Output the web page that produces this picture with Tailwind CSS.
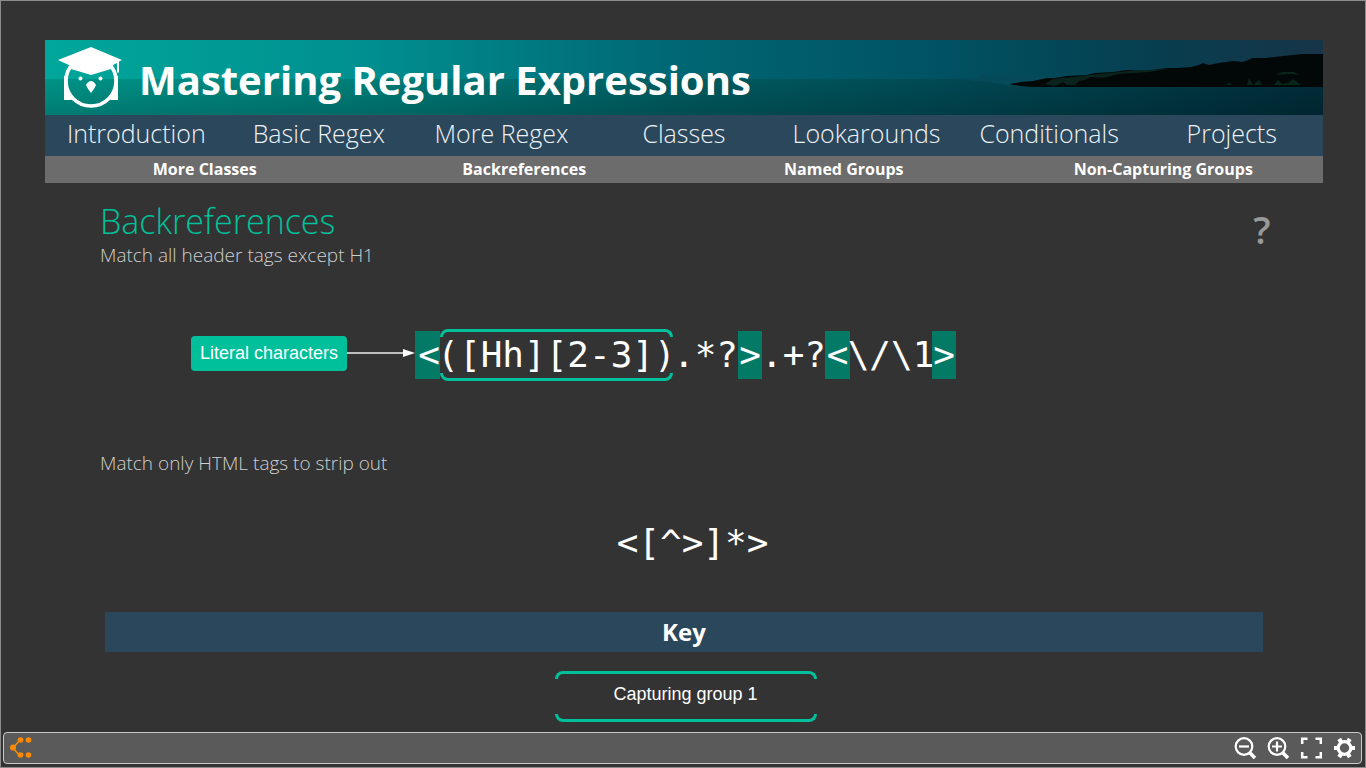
<!DOCTYPE html>
<html lang="en">
<head>
<meta charset="utf-8">
<meta name="viewport" content="width=device-width, initial-scale=1">
<title>Mastering Regular Expressions</title>
<script src="https://cdn.jsdelivr.net/npm/@tailwindcss/browser@4"></script>
</head>
<body class="flex min-h-screen flex-col border border-[#8c8c8c] bg-[#333333] font-['Open_Sans',sans-serif] text-white">
  <div class="mr-[42px] ml-11 pt-[39px]">
    <header>
      <div class="relative h-[75px] overflow-hidden">
        <svg class="absolute inset-0 h-full w-full" viewBox="0 0 1278 75" preserveAspectRatio="none" aria-hidden="true">
          <defs>
            <linearGradient id="sky" x1="0" x2="1" y1="0" y2="0">
              <stop offset="0" stop-color="#00a79a"/><stop offset=".25" stop-color="#008f90"/><stop offset=".5" stop-color="#006673"/><stop offset=".7" stop-color="#005262"/><stop offset=".86" stop-color="#063f50"/><stop offset="1" stop-color="#173448"/>
            </linearGradient>
            <linearGradient id="sea" x1="0" x2="1" y1="0" y2="0">
              <stop offset="0" stop-color="#009387"/><stop offset=".25" stop-color="#007d78"/><stop offset=".5" stop-color="#005c60"/><stop offset=".7" stop-color="#004954"/><stop offset="1" stop-color="#002c38"/>
            </linearGradient>
            <linearGradient id="depth" x1="0" x2="0" y1="0" y2="1">
              <stop offset="0" stop-color="#000" stop-opacity="0"/><stop offset="1" stop-color="#000" stop-opacity=".16"/>
            </linearGradient>
          </defs>
          <rect width="1278" height="75" fill="url(#sky)"/>
          <rect y="39" width="1278" height="36" fill="url(#sea)"/>
          <rect y="39" width="1278" height="36" fill="url(#depth)"/>
          <path d="M905 39l22-1 9-1v-3h4v3l17-1v-3h3v3l20 0 32 1v4l-50 4-20-3z" fill="#05495a"/>
          <path d="M965 44l11-2 12-1 14-3 8 0 12-2 20-1 8-2 18-1 14-2 18 1 22-3 10 0 14-1 8-2 4-2 6 2 10-2 14-2 10 1 10-4 12 0 18-2 20-2 20 0v33h-290l-12-1-8-1z" fill="#020807"/>
          <path d="M1000 44l8-5 20-2 16-2 40-4 40-2-20 3-30 2-16 4-12-1-6 3-6 1-4 4-8 0-4-3-8 4z" fill="#0a231c"/>
          <path d="M1180 45l4-2 4 2 14 0 2-7 4 7 6-5 3 5 12 0 4-5 4 4 6-1 5-4 8 6zM1230 35l7-3 12 0 6 3-8-1z" fill="#08251a"/>
        </svg>
        <div class="relative flex h-full items-center">
          <svg class="mt-1 ml-3 h-[66px] w-[66px] shrink-0 self-start" viewBox="0 0 66 66" role="img" aria-label="Owl logo">
            <circle cx="34" cy="37" r="25" fill="none" stroke="#fff" stroke-width="3.6"/>
            <path d="M1 16L34 3l31 13-3 1.500v11h-2V19l-6 3v3L34 31 14 25v-3z" fill="#fff"/>
            <path d="M9 32c-2 10 1 16 6 24H7V32zM59 32c2 10-1 16-6 24h8V32z" fill="#fff"/>
            <circle cx="23.500" cy="34.500" r="2" fill="#fff"/><circle cx="43.500" cy="34.500" r="2" fill="#fff"/>
            <path d="M34 37c2 0 3 1 5 4-1 3-3 5-5 8-2-3-4-5-5-8 2-3 3-4 5-4z" fill="#fff"/>
          </svg>
          <h1 class="ml-4 pt-1 text-[40px] leading-none font-bold whitespace-nowrap">Mastering Regular Expressions</h1>
        </div>
      </div>
      <nav aria-label="Chapters" class="grid h-[41px] grid-cols-7 bg-[#2b475c] text-center text-[25px] leading-9 font-light text-[#eef2f5]">
        <a href="#">Introduction</a><a href="#">Basic Regex</a><a href="#">More Regex</a><a href="#">Classes</a><a href="#">Lookarounds</a><a href="#">Conditionals</a><a href="#">Projects</a>
      </nav>
      <nav aria-label="Sections" class="grid h-[27px] grid-cols-4 bg-[#6c6c6c] text-center text-base leading-[26px] font-bold">
        <a href="#">More Classes</a><a href="#">Backreferences</a><a href="#">Named Groups</a><a href="#">Non-Capturing Groups</a>
      </nav>
    </header>
  </div>
  <main class="flex grow flex-col pr-[102px] pl-[99px]">
    <div class="flex justify-between pt-[18px]">
      <div>
        <h2 class="text-[34px] leading-10 font-light text-[#00c09b]">Backreferences</h2>
        <p class="mt-0.5 text-[19px] leading-6 font-light text-[#cfcfcf]">Match all header tags except H1</p>
      </div>
      <button type="button" aria-label="Help" class="-mr-[17px] h-14 w-9 text-[38px] leading-[56px] font-semibold text-[#999999]">?</button>
    </div>
    <div class="mt-[62px] ml-[91px] flex h-[52px] items-center">
      <div class="mb-1 h-[35px] w-[156px] shrink-0 rounded-sm bg-[#00c09b] text-center font-['Liberation_Sans',sans-serif] text-[18px] leading-[34px]">Literal characters</div>
      <svg class="mb-1 h-3 w-[68px] shrink-0" viewBox="0 0 68 12" aria-hidden="true"><path d="M0 6h58" stroke="#eee" stroke-width="1.500"/><path d="M56 2l12 4-12 4z" fill="#fff"/></svg>
      <code class="flex h-[52px] items-center font-['DejaVu_Sans_Mono',monospace] text-[36px] leading-[48px] whitespace-nowrap">
        <span class="flex w-[25px] justify-end bg-[#027a66]">&lt;</span>
        <span class="relative flex h-[52px] w-[233px] items-center justify-center">
          <span class="absolute inset-x-0 top-0 h-2 rounded-t-lg border-x-3 border-t-3 border-[#00c09b]"></span>([Hh][2-3])<span class="absolute inset-x-0 bottom-0 h-2 rounded-b-lg border-x-3 border-b-3 border-[#00c09b]"></span>
        </span>
        <span class="flex w-[65px] justify-center">.*?</span>
        <span class="flex w-6 justify-center bg-[#027a66]">&gt;</span>
        <span class="flex w-[63px] justify-center">.+?</span>
        <span class="flex w-[25px] justify-center bg-[#027a66]">&lt;</span>
        <span class="flex w-[82px] justify-center">\/\1</span>
        <span class="flex w-6 justify-center bg-[#027a66]">&gt;</span>
      </code>
    </div>
    <p class="mt-[70px] text-[19px] leading-6 font-light text-[#cfcfcf]">Match only HTML tags to strip out</p>
    <code class="mt-11 ml-[22px] block text-center font-['DejaVu_Sans_Mono',monospace] text-[36px] leading-[48px]">&lt;[^&gt;]*&gt;</code>
    <h3 class="mt-[45px] ml-[5px] h-10 bg-[#2b475c] text-center text-2xl leading-10 font-bold">Key</h3>
    <div class="relative mt-[19px] ml-2 flex h-[51px] w-[262px] items-center justify-center self-center font-['Liberation_Sans',sans-serif] text-[18px]">
      <span class="absolute inset-x-0 top-0 h-2 rounded-t-lg border-x-3 border-t-3 border-[#00c09b]"></span>
      <span class="pb-1">Capturing group 1</span>
      <span class="absolute inset-x-0 bottom-0 h-2 rounded-b-lg border-x-3 border-b-3 border-[#00c09b]"></span>
    </div>
  </main>
  <footer class="mr-[3px] mb-[3px] ml-0.5 flex h-8 shrink-0 items-center justify-between rounded border border-[#c8c8c8] bg-[#5a5a5a] px-[5px]">
    <button type="button" aria-label="Menu" class="h-6 w-6"><svg viewBox="0 0 24 24" fill="#ff8a00" aria-hidden="true"><path d="M11 4L4 12l7 8" fill="none" stroke="#ff8a00" stroke-width="1.500"/><circle cx="4" cy="11.500" r="3"/><circle cx="11.500" cy="4" r="2.800"/><circle cx="19.500" cy="4" r="2.800"/><circle cx="11.500" cy="19" r="2.800"/><circle cx="19.500" cy="19" r="2.800"/></svg></button>
    <div class="flex items-center gap-[9px]">
      <button type="button" aria-label="Zoom out" class="h-6 w-6"><svg viewBox="0 0 24 24" fill="none" stroke="#fff" aria-hidden="true"><circle cx="11" cy="10.500" r="8.300" stroke-width="2.200"/><path d="M17 17l5 5" stroke-width="3.500"/><path d="M6 10.500h10" stroke-width="2.200"/></svg></button>
      <button type="button" aria-label="Zoom in" class="h-6 w-6"><svg viewBox="0 0 24 24" fill="none" stroke="#fff" aria-hidden="true"><circle cx="11" cy="10.500" r="8.300" stroke-width="2.200"/><path d="M17 17l5 5" stroke-width="3.500"/><path d="M6 10.500h10M11 5.500v10" stroke-width="2.200"/></svg></button>
      <button type="button" aria-label="Full screen" class="h-6 w-6"><svg viewBox="0 0 24 24" fill="none" stroke="#fff" stroke-width="2.500" aria-hidden="true"><path d="M8.500 2.700H3.200v5.300M16.500 2.700h5.300v5.300M8.500 21.300H3.200v-5.300M16.500 21.300h5.300v-5.300"/></svg></button>
      <button type="button" aria-label="Settings" class="h-6 w-6"><svg viewBox="0 0 24 24" fill="none" stroke="#fff" aria-hidden="true"><circle cx="12.500" cy="12" r="6.300" stroke-width="3.200"/><path d="M2 12h3.500M19.500 12H23M7.200 2.900L9 6M17.800 2.900L16 6M7.200 21.100L9 18M17.800 21.100L16 18" stroke-width="4.200"/></svg></button>
    </div>
  </footer>
</body>
</html>
